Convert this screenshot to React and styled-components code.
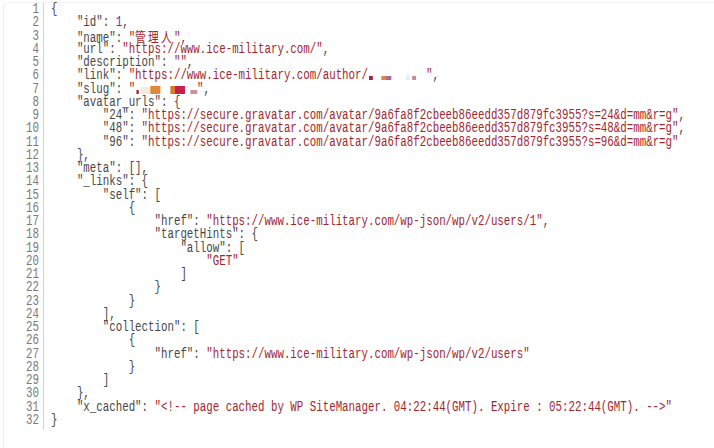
import React from "react";
import styled, { createGlobalStyle } from "styled-components";

const SCALE = 0.77;
const LINE_H = 13.25;

const GlobalStyle = createGlobalStyle`
  html, body {
    margin: 0;
    padding: 0;
    background: #ffffff;
  }
  body {
    font-family: "Liberation Mono", "Noto Sans CJK JP", monospace;
  }
`;

const Page = styled.div`
  width: 714px;
  height: 448px;
  overflow: hidden;
  background: #fff;
  padding: 2px 0 0 3px;
  box-sizing: border-box;
`;

const Panel = styled.div`
  display: flex;
  align-items: flex-start;
  min-height: 460px;
  border-left: 1px solid #ececec;
  border-top: 1px solid #f3f3f3;
  border-top-left-radius: 6px;
`;

const Gutter = styled.div`
  flex: 0 0 40px;
  width: 40px;
  box-sizing: border-box;
  padding: 0 4px 3px 0;
  border-right: 1px solid #d4d4d4;
  display: flex;
  flex-direction: column;
`;

const LineNo = styled.div`
  height: ${LINE_H}px;
  line-height: ${LINE_H}px;
  font-size: 14px;
  color: #7a7a7a;
  text-align: right;
  white-space: pre;
  transform: scaleX(${SCALE});
  transform-origin: right center;
`;

const Code = styled.div`
  flex: 1 1 auto;
  min-width: 0;
  padding-left: 7px;
  display: flex;
  flex-direction: column;
`;

const Line = styled.div`
  height: ${LINE_H}px;
  line-height: ${LINE_H}px;
  font-size: 14px;
  color: #474747;
  white-space: pre;
  transform: scaleX(${SCALE});
  transform-origin: left center;
`;

const Str = styled.span`
  color: #a3262e;
`;

const Num = styled.span`
  color: #4a3cc0;
`;

const Cjk = styled.span`
  font-family: "Noto Sans CJK JP", sans-serif;
  letter-spacing: 2.8px;
  font-size: 14px;
`;

const Pixel = styled.span`
  display: inline-block;
  width: ${(p) => p.$w / SCALE}px;
  height: ${(p) => p.$h}px;
  background: ${(p) => p.$c || "transparent"};
  vertical-align: ${(p) => p.$v || 0}px;
`;

const linkBlocks = [
  [1, 0, null], [4, 4, "#a3234a"], [8, 0, null], [5, 4, "#d98a3c"], [5, 4, "#a86a9a"],
  [15, 0, null], [4, 5, "#dff3f6"], [2, 0, null], [4, 4, "#c48c96"], [10, 0, null],
];

const slugBlocks = [
  [1, 0, null], [3, 4, "#9a2340"], [1, 0, null], [10, 7, "#f3ecde"], [10, 8, "#e0873a"],
  [10, 0, null], [5, 8, "#d8782e"], [10, 8, "#c8204a"], [5, 0, null], [7, 4, "#c9939b"],
];

const S = (t) => ["s", t];
const P = (t) => ["p", t];

const lines = [
  [P("{")],
  [P('    "id": '), ["n", "1"], P(",")],
  [P('    "name": '), S('"'), ["c", "管理人"], S('"'), P(",")],
  [P('    "url": '), S('"https://www.ice-military.com/"'), P(",")],
  [P('    "description": '), S('""'), P(",")],
  [P('    "link": '), S('"https://www.ice-military.com/author/'), ["x", linkBlocks], S('"'), P(",")],
  [P('    "slug": '), S('"'), ["x", slugBlocks], S('"'), P(",")],
  [P('    "avatar_urls": {')],
  [P('        "24": '), S('"https://secure.gravatar.com/avatar/9a6fa8f2cbeeb86eedd357d879fc3955?s=24&d=mm&r=g"'), P(",")],
  [P('        "48": '), S('"https://secure.gravatar.com/avatar/9a6fa8f2cbeeb86eedd357d879fc3955?s=48&d=mm&r=g"'), P(",")],
  [P('        "96": '), S('"https://secure.gravatar.com/avatar/9a6fa8f2cbeeb86eedd357d879fc3955?s=96&d=mm&r=g"')],
  [P("    },")],
  [P('    "meta": [],')],
  [P('    "_links": {')],
  [P('        "self": [')],
  [P("            {")],
  [P('                "href": '), S('"https://www.ice-military.com/wp-json/wp/v2/users/1"'), P(",")],
  [P('                "targetHints": {')],
  [P('                    "allow": [')],
  [P("                        "), S('"GET"')],
  [P("                    ]")],
  [P("                }")],
  [P("            }")],
  [P("        ],")],
  [P('        "collection": [')],
  [P("            {")],
  [P('                "href": '), S('"https://www.ice-military.com/wp-json/wp/v2/users"')],
  [P("            }")],
  [P("        ]")],
  [P("    },")],
  [P('    "x_cached": '), S('"<!-- page cached by WP SiteManager. 04:22:44(GMT). Expire : 05:22:44(GMT). -->"')],
  [P("}")],
];

const Token = ({ kind, value }) => {
  if (kind === "s") return <Str>{value}</Str>;
  if (kind === "n") return <Num>{value}</Num>;
  if (kind === "c") return <Str><Cjk>{value}</Cjk></Str>;
  if (kind === "x")
    return value.map(([w, h, c], i) => (
      <Pixel key={i} $w={w} $h={h} $c={c} $v={-1} />
    ));
  return <>{value}</>;
};

export default function App() {
  return (
    <>
      <GlobalStyle />
      <Page>
        <Panel>
          <Gutter>
            {lines.map((_, i) => (
              <LineNo key={i}>{i + 1}</LineNo>
            ))}
          </Gutter>
          <Code>
            {lines.map((toks, i) => (
              <Line key={i}>
                {toks.map(([k, v], j) => (
                  <Token key={j} kind={k} value={v} />
                ))}
              </Line>
            ))}
          </Code>
        </Panel>
      </Page>
    </>
  );
}
